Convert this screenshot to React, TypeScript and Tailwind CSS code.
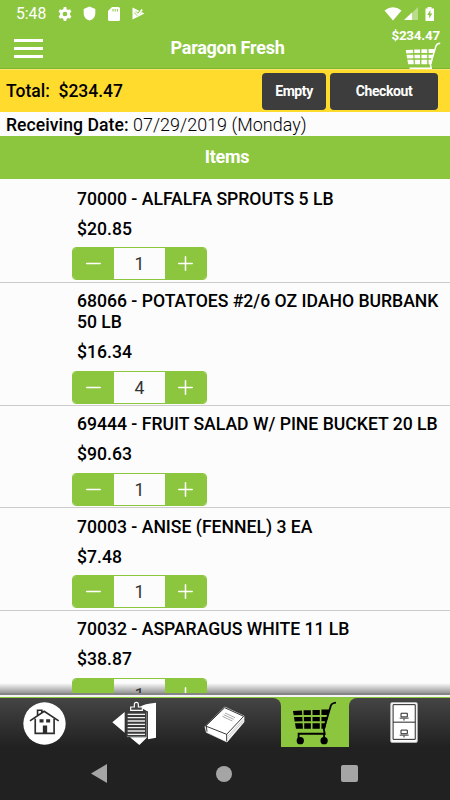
import { Minus, Plus } from "lucide-react"

const items = [
  { name: "70000 - ALFALFA SPROUTS 5 LB", price: "$20.85", qty: 1 },
  { name: "68066 - POTATOES #2/6 OZ IDAHO BURBANK 50 LB", price: "$16.34", qty: 4, tall: true },
  { name: "69444 - FRUIT SALAD W/ PINE BUCKET 20 LB", price: "$90.63", qty: 1 },
  { name: "70003 - ANISE (FENNEL) 3 EA", price: "$7.48", qty: 1 },
  { name: "70032 - ASPARAGUS WHITE 11 LB", price: "$38.87", qty: 1 },
]

function StatusBar() {
  return (
    <div className="flex h-[27px] items-center text-white">
      <span className="ml-4 w-[42px] text-[15.7px] leading-[27px]">5:48</span>
      {/* settings */}
      <svg className="h-[14px] w-[14px]" viewBox="1 1 22 22" fill="currentColor">
        <path
          fillRule="evenodd"
          d="M20 12l-.2-1.6 2.3-1.9-2.2-3.8-2.9 1.1-2.6-1.5L14 1H10l-.5 3.3L7 5.8 4 4.7 1.9 8.5l2.3 1.9a9 9 0 0 0 0 3.2l-2.3 1.9L4 19.3l3-1.1 2.5 1.5.5 3.3h4l.5-3.3 2.5-1.5 2.9 1.1 2.2-3.8-2.3-1.9zM12 8.300a3.700 3.700 0 1 1 0 7.400 3.700 3.700 0 0 1 0-7.400z"
        />
      </svg>
      {/* shield */}
      <svg className="ml-[11px] h-[15px] w-[13px]" viewBox="0 0 13 15" fill="currentColor">
        <path d="M6.500.5L12.300 3v4.500c0 3-2 6-5.800 7-3.800-1-5.800-4-5.800-7V3z" />
      </svg>
      {/* sd card */}
      <svg className="ml-[12px] h-[14px] w-[12px]" viewBox="0 0 12 14">
        <path fill="#fff" d="M4 0h6.500Q12 0 12 1.500v11q0 1.500-1.500 1.500h-9Q0 14 0 12.500V4z" />
        <path stroke="#8cc63f" strokeWidth="1" d="M5 2v2.500M7.200 2v2.500M9.400 2v2.500" />
      </svg>
      {/* play */}
      <svg className="ml-3 h-[13px] w-[13px]" viewBox="0 0 13 13">
        <path fill="#fff" d="M.5.5L12.500 6.500.5 12.500z" />
        <path fill="none" stroke="#8cc63f" strokeWidth="2.600" d="M3 5l2.500 2.500L12 1" />
        <path fill="none" stroke="#fff" strokeWidth="1.500" d="M3.200 5L6 8l4.200-5.500" />
      </svg>
      <svg className="ml-auto h-[14px] w-[18px]" viewBox="0 0 18 14" fill="currentColor">
        <path d="M.5 3.500Q9-3 17.500 3.500L9 13.500z" />
      </svg>
      <svg className="ml-[2px] h-[13px] w-[14px]" viewBox="0 0 14 13">
        <path fill="#fff" fillOpacity=".4" d="M14 0v13H1z" />
        <path fill="#fff" d="M8 5.500V13H0z" />
      </svg>
      <svg className="ml-[7px] mr-4 h-[14px] w-[9px]" viewBox="0 0 9 14">
        <path fill="#fff" d="M2.500 0h4v1.500H9V14H.5V1.500h2z" />
        <path fill="#8cc63f" d="M5.500 3L2.200 8h2v3.500L7.300 6.500h-2z" />
      </svg>
    </div>
  )
}

function CartIcon({ className }: { className: string }) {
  return (
    <svg className={className} viewBox="66 64 136 136" fill="currentColor">
      {/* basket cells */}
      <path d="M69 94l27-1 1 13-26 1zM101 92h22v14h-22zM128 91h22v15h-22zM155 90h23l-3 16h-20z" />
      <path d="M72 112h25l1 13-24 1zM102 112h21v13h-21zM128 112h22v13h-22zM155 112h19l-3 13h-16z" />
      <path d="M75 131h23l1 17H78zM103 131h20v17h-20zM128 131h22v17h-22zM155 131h15l-4 17h-11z" />
      <path
        d="M199 69q-13 1-16 10l-21 70 3 14H86v14M163 163v14"
        fill="none"
        stroke="currentColor"
        strokeWidth="5.500"
      />
      <circle cx="91" cy="184" r="11" />
      <circle cx="163" cy="184" r="11" />
    </svg>
  )
}

function Quantity({ value }: { value: number }) {
  return (
    <div className="ml-[-5px] mt-[7.5px] flex h-[33px] w-[135px] shrink-0 overflow-hidden rounded-[4px] border border-[#8cc63f]">
      <button className="flex w-[41px] items-center justify-center bg-[#8cc63f] text-white" aria-label="Decrease">
        <Minus size={23} strokeWidth={1.6} />
      </button>
      <span className="flex-1 text-center text-[17.6px] leading-[33px] text-[#333]">{value}</span>
      <button className="flex w-[41px] items-center justify-center bg-[#8cc63f] text-white" aria-label="Increase">
        <Plus size={23} strokeWidth={1.6} />
      </button>
    </div>
  )
}

function HomeIcon() {
  return (
    <svg className="h-[43px] w-[43px]" viewBox="69 51 130 130" fill="none">
      <circle cx="134" cy="116" r="64" fill="#fff" />
      <path d="M90 108l43-29 44 29M106 102v44h57v-44M113 91V76h13v8" stroke="#2d2d2d" strokeWidth="5" />
      <path d="M119 103h12v10h-12zM139 103h12v10h-12zM129 122h13v25h-13z" fill="#2d2d2d" />
    </svg>
  )
}

function ReturnsIcon() {
  return (
    <svg className="h-[45px] w-[45px]" viewBox="38 48 135 135">
      <path fill="#fff" d="M39 112l37-31v62zM122 66q12-10 48-13v105l-24 5V80zM92 157h52l-24 23z" />
      <path fill="#3a3a3a" d="M81 79h64v77H81z" />
      <path
        stroke="#eef1ef"
        strokeWidth="4"
        d="M85 88h52M85 98h52M85 108h52M85 118h52M85 128h52M85 138h52M85 148h52"
      />
      <path stroke="#9aa5a1" strokeWidth="2" d="M142 82v73H83" fill="none" />
      <path fill="#444" stroke="#fff" strokeWidth="3.500" d="M94 66h11v-8a6 6 0 0 1 12 0v8h12v10H94z" />
    </svg>
  )
}

function BookIcon() {
  return (
    <svg className="h-[37px] w-[41px]" viewBox="40 62 123 111">
      <path
        fill="#fff"
        stroke="#fff"
        strokeWidth="2"
        strokeLinejoin="round"
        d="M102 65l58 27v18l-51 60-62-29-4-17z"
      />
      <path fill="none" stroke="#111" strokeWidth="2.500" d="M45 122l57-55 57 26-51 54zM108 147v21M47 123l2 16" />
      <path stroke="#aaa" strokeWidth="3" d="M103 83l30 14M99 88l30 14M95 93l30 14" />
      <path fill="none" stroke="#999" strokeWidth="1.500" d="M111 153l48-52M111 160l48-54" />
    </svg>
  )
}

function CabinetIcon() {
  return (
    <svg className="h-[41px] w-[28px]" viewBox="211 52 84 124" fill="none">
      <rect x="213" y="54" width="80" height="120" rx="3" fill="#fff" stroke="#c4c4c4" strokeWidth="3" />
      <path d="M220 60h67v105h-67zM220 113h67" stroke="#222" strokeWidth="3" />
      <path d="M244 86h19v11h-19zM253 102v6M244 137h19v11h-19zM253 153v6" stroke="#222" strokeWidth="3" />
      <path d="M240 101h27M240 152h27" stroke="#555" strokeWidth="4" />
    </svg>
  )
}

export default function App() {
  return (
    <div className="flex h-[800px] w-[450px] flex-col overflow-hidden bg-[#fcfcfc] font-['Roboto',sans-serif] text-black">
      <header className="h-[69px] shrink-0 border-b border-[#7fb52f] bg-[#8cc63f]">
        <StatusBar />
        <div className="grid h-[41px] grid-cols-3 text-white">
          <button className="ml-[14px] mt-3 flex h-[19px] w-[29px] flex-col justify-between" aria-label="Menu">
            <span className="h-[3px] w-full bg-white" />
            <span className="h-[3px] w-full bg-white" />
            <span className="h-[3px] w-full bg-white" />
          </button>
          <h1 className="whitespace-nowrap pl-[5px] pt-[7px] text-center text-[18px] font-bold leading-[27px] tracking-[-0.25px]">
            Paragon Fresh
          </h1>
          <div className="flex h-[42px] flex-col items-end overflow-hidden pr-[9px]">
            <span className="pr-px text-[13.4px] font-bold leading-[18px] tracking-[-0.2px]">$234.47</span>
            <CartIcon className="-mt-[3px] h-[36px] w-[36px] shrink-0" />
          </div>
        </div>
      </header>

      <div className="flex h-[43px] shrink-0 items-center border-t border-[#ffe66b] bg-[#ffdb2e] pl-[6px] pr-3">
        <span className="flex-1 whitespace-pre text-[17.5px] font-medium">Total:  $234.47</span>
        <button className="mr-1 h-[37px] w-[64px] rounded-[4px] bg-[#3d3d3d] text-[14px] font-bold tracking-[-0.4px] text-white">
          Empty
        </button>
        <button className="h-[37px] w-[108px] rounded-[4px] bg-[#3d3d3d] text-[14px] font-bold tracking-[-0.4px] text-white">
          Checkout
        </button>
      </div>
      <div className="h-6 shrink-0 whitespace-nowrap pl-[6px] text-[17.6px] leading-[25px]">
        <span className="font-medium tracking-[0.05px]">Receiving Date:</span>{" "}
        <span className="text-[17.9px] font-light tracking-[0.05px]">07/29/2019 (Monday)</span>
      </div>
      <div className="h-[43px] shrink-0 bg-[#8cc63f] pl-1 text-center text-[18px] font-bold leading-[42px] tracking-[-0.3px] text-white">
        Items
      </div>

      <main className="relative h-[514px] shrink-0 overflow-hidden pt-px">
        {/* shadow cast by the tab bar, under the rows */}
        <div className="absolute inset-x-0 bottom-0 h-[10px] bg-gradient-to-b from-transparent to-black/40" />
        {items.map((item) => (
          <section
            key={item.name}
            className={`relative border-b border-[#ccc] pl-[77px] pt-[8.5px] ${item.tall ? "h-[123px]" : "h-[102.5px]"}`}
          >
            <h2 className="text-[17.6px] font-medium leading-[21px]">{item.name}</h2>
            <p className="mt-[9px] text-[17.6px] font-medium leading-[21px]">{item.price}</p>
            <Quantity value={item.qty} />
          </section>
        ))}
      </main>

      <div className="h-[2px] shrink-0 bg-[#858585]" />
      <div className="h-[2px] shrink-0 bg-[#f4f4f4]" />
      <nav className="flex h-[50px] shrink-0 border-t border-[#8cc63f] bg-[#8cc63f]">
        <div className="flex w-[281px] rounded-tr-[8px] bg-gradient-to-b from-[#454545] to-[#212121]">
          <div className="flex w-[89px] justify-center pt-1"><HomeIcon /></div>
          <div className="flex w-[91px] justify-center pt-[3px]"><ReturnsIcon /></div>
          <div className="flex w-[88px] justify-center pt-2"><BookIcon /></div>
        </div>
        <div className="flex w-[68px] justify-center pr-[2px] pt-[3px] text-black">
          <CartIcon className="h-[45px] w-[45px]" />
        </div>
        <div className="flex flex-1 rounded-tl-[8px] bg-gradient-to-b from-[#454545] to-[#212121] pl-[41px] pt-1">
          <CabinetIcon />
        </div>
      </nav>
      <div className="flex flex-1 items-center justify-center gap-[109px] bg-[#212121] pr-[2px] text-[#a5a5a5]">
        <svg className="h-[19px] w-[16px]" viewBox="0 0 16 19"><path fill="currentColor" d="M0 9.500L16 0v19z" /></svg>
        <span className="h-4 w-4 rounded-full bg-[#a5a5a5]" />
        <span className="h-[17px] w-[17px] rounded-[2px] bg-[#a5a5a5]" />
      </div>
    </div>
  )
}
